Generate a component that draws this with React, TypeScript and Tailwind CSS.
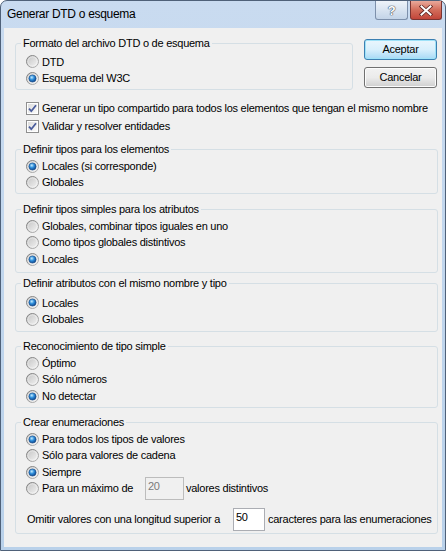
import React from 'react';

function Radio({ checked }: { checked?: boolean }) {
  return (
    <svg width="13" height="13" viewBox="0 0 13 13" className="shrink-0">
      <circle cx="6.5" cy="6.5" r="6" fill="url(#rFill)" stroke="url(#rOuter)" strokeWidth="1" />
      <circle cx="6.5" cy="6.5" r="4.6" fill="none" stroke="#ffffff" strokeOpacity="0.5" strokeWidth="0.8" />
      {checked && <circle cx="6.5" cy="6.5" r="3.6" fill="url(#rDot)" stroke="#194e8c" strokeWidth="0.6" />}
    </svg>
  );
}

function Check() {
  return (
    <svg width="13" height="13" viewBox="0 0 13 13" className="shrink-0">
      <rect x="0.5" y="0.5" width="12" height="12" fill="#ffffff" stroke="#8f8f8f" />
      <rect x="2" y="2" width="9" height="9" fill="url(#cFill)" />
      <path d="M3 6.6 L5.3 9.2 L10 3.2" fill="none" stroke="#4a5c9c" strokeWidth="1.8" strokeLinejoin="miter" />
    </svg>
  );
}

function Group({ label, className, children }: { label: string; className: string; children: React.ReactNode }) {
  return (
    <div className={`relative border border-[#d5dfe5] rounded-[3px] flex flex-col pl-[10px] ${className}`}>
      <div className="absolute left-[5px] -top-[7px] px-[2px] bg-[#f0f0f0] leading-[13px] whitespace-nowrap">{label}</div>
      {children}
    </div>
  );
}

function Row({ checked, children }: { checked?: boolean; children: React.ReactNode }) {
  return (
    <div className="h-[16.5px] flex items-center gap-[3px] whitespace-nowrap">
      <Radio checked={checked} />
      {children}
    </div>
  );
}

function Button({ label, def }: { label: string; def?: boolean }) {
  return (
    <div
      className={`w-[73px] h-[21px] rounded-[3px] flex items-center justify-center border ${
        def
          ? 'border-[#3c7fb1] bg-gradient-to-b from-[#eaf6fd] via-[#d9f0fc] to-[#a7d9f5] shadow-[inset_0_0_0_1px_#9ee2f8]'
          : 'border-[#707070] bg-gradient-to-b from-[#f2f2f2] via-[#ebebeb] to-[#cfcfcf] shadow-[inset_0_0_0_1px_#fcfcfc]'
      }`}
    >
      {label}
    </div>
  );
}

export default function App() {
  return (
    <div className="w-[446px] h-[551px] overflow-hidden bg-white">
      <svg width="0" height="0" className="absolute">
        <defs>
          <linearGradient id="rOuter" x1="0" y1="0" x2="1" y2="1">
            <stop offset="0" stopColor="#767676" />
            <stop offset="1" stopColor="#b8b8b8" />
          </linearGradient>
          <linearGradient id="rFill" x1="0" y1="0" x2="1" y2="1">
            <stop offset="0" stopColor="#c2c2c2" />
            <stop offset="1" stopColor="#f6f6f6" />
          </linearGradient>
          <radialGradient id="rDot" cx="0.4" cy="0.35" r="0.7">
            <stop offset="0" stopColor="#c6ecfd" />
            <stop offset="0.45" stopColor="#2f8fdc" />
            <stop offset="1" stopColor="#0a3d82" />
          </radialGradient>
          <linearGradient id="cFill" x1="0" y1="0" x2="1" y2="1">
            <stop offset="0" stopColor="#dcdcdc" />
            <stop offset="1" stopColor="#fbfbfb" />
          </linearGradient>
        </defs>
      </svg>
      <div className="w-[446px] h-[551px] flex flex-col border border-[#4f6179] rounded-t-[7px] bg-gradient-to-b from-[#c9dbf0] to-[#b9d1ea] font-['Liberation_Sans',Arial,sans-serif] text-[11px] tracking-[-0.25px] text-black">
        {/* title bar */}
        <div className="h-[27px] flex items-start shrink-0">
          <div className="pl-[6px] pt-[6px] text-[12px] leading-[15px] tracking-[-0.3px] text-black">Generar DTD o esquema</div>
          <div className="ml-auto flex gap-[2px] mr-[3px]">
            <div className="w-[33px] h-[19px] rounded-b-[3px] border border-t-0 border-[#7d90ab] bg-gradient-to-b from-[#eef3f9] via-[#d9e4f1] to-[#c3d4e8] flex items-center justify-center text-[13px] font-bold text-white leading-none [text-shadow:0_0_1px_#3d4a5c,0_0_1px_#3d4a5c,0_0_1px_#3d4a5c]">
              ?
            </div>
            <div className="w-[32px] h-[19px] rounded-b-[3px] border border-t-0 border-[#7a3431] bg-gradient-to-b from-[#e9a99b] via-[#d26c5a] to-[#c2453a] flex items-center justify-center">
              <svg width="14" height="11" viewBox="0 0 14 11">
                <path d="M2.5 1.5 L11.5 9.5 M11.5 1.5 L2.5 9.5" stroke="#5c2320" strokeWidth="3.6" strokeLinecap="square" />
                <path d="M2.5 1.5 L11.5 9.5 M11.5 1.5 L2.5 9.5" stroke="#ffffff" strokeWidth="2" strokeLinecap="square" />
              </svg>
            </div>
          </div>
        </div>
        {/* content */}
        <div className="flex-1 mx-[3px] mb-[3px] bg-[#f0f0f0] flex flex-col pl-[11px] pr-[4px]">
          <div className="flex items-start">
            <Group label="Formato del archivo DTD o de esquema" className="mt-[15px] w-[338px] h-[47px] pt-[9.5px]">
              <Row>DTD</Row>
              <Row checked>Esquema del W3C</Row>
            </Group>
            <div className="ml-[11px] mt-[11px] flex flex-col gap-[7px]">
              <Button label="Aceptar" def />
              <Button label="Cancelar" />
            </div>
          </div>
          <div className="mt-[9px] h-[18px] flex items-center gap-[3px] pl-[11px] whitespace-nowrap">
            <Check />
            Generar un tipo compartido para todos los elementos que tengan el mismo nombre
          </div>
          <div className="h-[18px] flex items-center gap-[3px] pl-[11px] whitespace-nowrap">
            <Check />
            Validar y resolver entidades
          </div>
          <Group label="Definir tipos para los elementos" className="mt-[14px] h-[45px] pt-[7.75px]">
            <Row checked>Locales (si corresponde)</Row>
            <Row>Globales</Row>
          </Group>
          <Group label="Definir tipos simples para los atributos" className="mt-[15px] h-[64px] pt-[7.75px]">
            <Row>Globales, combinar tipos iguales en uno</Row>
            <Row>Como tipos globales distintivos</Row>
            <Row checked>Locales</Row>
          </Group>
          <Group label="Definir atributos con el mismo nombre y tipo" className="mt-[10px] h-[49px] pt-[10.5px]">
            <Row checked>Locales</Row>
            <Row>Globales</Row>
          </Group>
          <Group label="Reconocimiento de tipo simple" className="mt-[14px] h-[62px] pt-[7.75px]">
            <Row>Óptimo</Row>
            <Row>Sólo números</Row>
            <Row checked>No detectar</Row>
          </Group>
          <Group label="Crear enumeraciones" className="mt-[14px] h-[112px] pt-[7.75px]">
            <Row checked>Para todos los tipos de valores</Row>
            <Row>Sólo para valores de cadena</Row>
            <Row checked>Siempre</Row>
            <Row>
              <span className="w-[100px]">Para un máximo de</span>
              <div className="w-[39px] h-[23px] shrink-0 border border-[#bcbcbc] bg-[#f0f0f0] text-[#7a7a7a] pl-[2px] pt-[2px] leading-[13px]">20</div>
              <span className="ml-[-1px]">valores distintivos</span>
            </Row>
            <div className="mt-[11px] h-[23px] flex items-center whitespace-nowrap pl-[1px]">
              <span className="w-[206px]">Omitir valores con una longitud superior a</span>
              <div className="w-[32px] h-[23px] shrink-0 border border-[#abadb3] bg-white pl-[2px] pt-[2px] leading-[13px]">50</div>
              <span className="ml-[3px]">caracteres para las enumeraciones</span>
            </div>
          </Group>
        </div>
      </div>
    </div>
  );
}
